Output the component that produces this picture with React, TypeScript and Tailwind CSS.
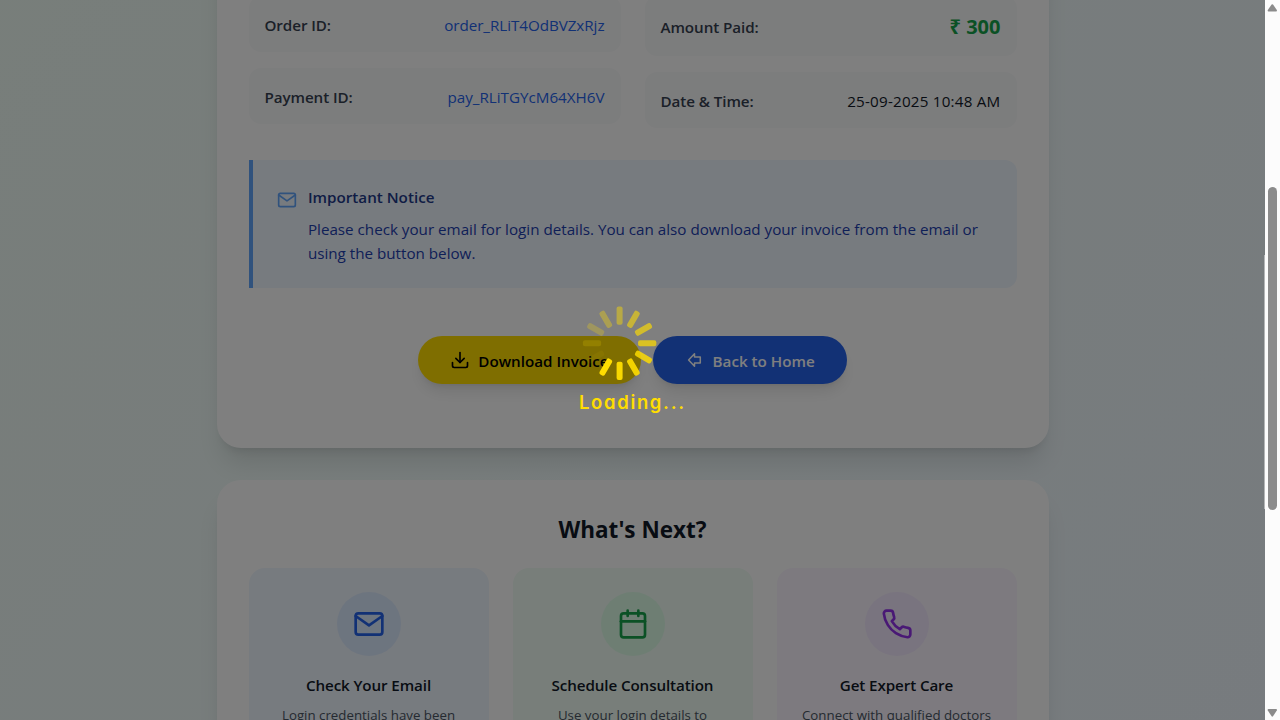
import type { ReactNode } from 'react';
import { FiCalendar, FiDownload, FiMail, FiPhone } from 'react-icons/fi';

function DetailRow({ label, children }: { label: string; children: ReactNode }) {
  return (
    <div className="flex items-center justify-between rounded-xl bg-[#f9fafb] p-4">
      <span className="-mb-px pt-px text-[15.2px] leading-6 font-semibold tracking-[-0.08px] text-[#374151]">{label}</span>
      {children}
    </div>
  );
}

function NextStep({
  card,
  circle,
  icon,
  title,
  children,
}: {
  card: string;
  circle: string;
  icon: ReactNode;
  title: string;
  children: ReactNode;
}) {
  return (
    <div className={`rounded-2xl p-6 text-center ${card}`}>
      <div className={`mx-auto mb-4 flex size-16 items-center justify-center rounded-full ${circle}`}>{icon}</div>
      <h3 className="mb-[7px] pt-px text-[15.2px] leading-6 font-semibold tracking-[-0.11px] text-[#111827]">{title}</h3>
      <p className="pt-px text-[13.3px] leading-5 text-[#4b5563]">{children}</p>
    </div>
  );
}

const SPOKES = [1, 0.95, 0.9, 0.82, 0.72, 0.65, 0.56, 0.45, 0.35, 0.25, 0.16, 0.06];

function Spinner() {
  return (
    <svg width="80" height="80" viewBox="-39.6 -40.2 80 80">
      {SPOKES.map((opacity, i) => (
        <rect
          key={i}
          x="-3"
          y="-36.7"
          width="6"
          height="18.2"
          rx="2"
          fill="#ffdd00"
          opacity={opacity}
          transform={`rotate(${210 - i * 30})`}
        />
      ))}
    </svg>
  );
}

function ScrollBar() {
  return (
    <div className="flex w-[15px] shrink-0 flex-col items-center bg-[#fcfcfc]">
      <svg width="15" height="16" viewBox="0 0 15 16" fill="#8b8b8b">
        <path d="M6.6 4.6q.7-.9 1.4 0l3.8 5.4q.5 1.5-.7 1.5H3.5q-1.2 0-.7-1.5z" />
      </svg>
      <div className="mt-[171px] h-[323px] w-[9px] rounded-full bg-[#8b8b8b]" />
      <svg className="mt-auto" width="15" height="16" viewBox="0 0 15 16" fill="#8b8b8b">
        <path d="M6.6 12.2q.7.9 1.4 0l3.8-5.6q.5-1.5-.7-1.5H3.5q-1.2 0-.7 1.5z" />
      </svg>
    </div>
  );
}

export default function App() {
  return (
    <div className="flex h-[720px] w-[1280px] overflow-hidden font-['Open_Sans','Noto_Sans',sans-serif]">
      <div className="relative min-w-0 flex-1 overflow-hidden">
        <main className="-mt-[380px] h-[1529px] bg-linear-to-br/srgb from-[#f0fdf4] to-[#eff6ff] pt-[180px]">
          <div className="mx-auto flex w-[832px] flex-col gap-8">
            <section className="rounded-3xl bg-white px-8 pt-[196px] pb-16 shadow-xl">
              <div className="grid grid-cols-2 items-start gap-6">
                <div className="flex flex-col gap-4">
                  <DetailRow label="Order ID:">
                    <span className="-mb-px pt-px text-[15.2px] leading-6 tracking-[-0.04px] text-[#2563eb]">
                      order_RLiT4OdBVZxRjz
                    </span>
                  </DetailRow>
                  <DetailRow label="Payment ID:">
                    <span className="-mb-px pt-px text-[15.2px] leading-6 text-[#2563eb]">pay_RLiTGYcM64XH6V</span>
                  </DetailRow>
                </div>
                <div className="flex flex-col gap-4">
                  <DetailRow label="Amount Paid:">
                    <span className="-mb-px pt-px text-[20px] leading-7 font-bold text-[#16a34a]">₹ 300</span>
                  </DetailRow>
                  <DetailRow label="Date & Time:">
                    <span className="-mb-px pt-px text-[15.2px] leading-6 tracking-[0.22px] text-[#111827]">
                      25-09-2025 10:48 AM
                    </span>
                  </DetailRow>
                </div>
              </div>

              <div className="mt-8 flex gap-3 rounded-r-xl border-l-4 border-[#60a5fa] bg-[#eff6ff] p-6">
                <FiMail className="mt-1.5 size-5 shrink-0 text-[#60a5fa]" />
                <div className="-ml-[0.6px]">
                  <h3 className="mb-[7px] pt-px text-[15.2px] leading-6 font-semibold text-[#1e3a8a]">Important Notice</h3>
                  <p className="-mb-px pt-px text-[15.2px] leading-6 text-[#1e40af]">
                    Please check your email for login details. You can also download your invoice from the email or
                    using the button below.
                  </p>
                </div>
              </div>

              <div className="mt-12 flex justify-center gap-3">
                <button className="flex h-12 items-center gap-2 rounded-full bg-[#ffdd00] px-8 text-[15.2px] font-semibold whitespace-nowrap text-black shadow-lg">
                  <FiDownload className="size-5" />
                  <span className="pt-0.5">Download Invoice</span>
                </button>
                <button className="flex h-12 items-center gap-2 rounded-full bg-[#2563eb] px-8 text-[15.2px] font-semibold whitespace-nowrap text-white shadow-lg">
                  <svg
                    width="20"
                    height="20"
                    viewBox="0 0 20 20"
                    fill="none"
                    stroke="currentColor"
                    strokeWidth="1.5"
                    strokeLinejoin="round"
                  >
                    <path d="M3.6 10l5.9-6.2v3.1h5.8v6.2H9.500v3.1z" />
                  </svg>
                  <span className="pt-0.5">Back to Home</span>
                </button>
              </div>
            </section>

            <section className="rounded-3xl bg-white p-8 shadow-xl">
              <h2 className="mb-[22px] pt-0.5 text-center text-[22.5px] leading-8 font-bold text-[#111827]">
                What's Next?
              </h2>
              <div className="grid grid-cols-3 gap-6">
                <NextStep
                  card="bg-[#eff6ff]"
                  circle="bg-[#dbeafe]"
                  icon={<FiMail className="size-8 text-[#2563eb]" />}
                  title="Check Your Email"
                >
                  Login credentials have been
                </NextStep>
                <NextStep
                  card="bg-[#f0fdf4]"
                  circle="bg-[#dcfce7]"
                  icon={<FiCalendar className="size-8 text-[#16a34a]" />}
                  title="Schedule Consultation"
                >
                  Use your login details to
                </NextStep>
                <NextStep
                  card="bg-[#faf5ff]"
                  circle="bg-[#f3e8ff]"
                  icon={<FiPhone className="size-8 text-[#9333ea]" />}
                  title="Get Expert Care"
                >
                  Connect with qualified doctors
                </NextStep>
              </div>
            </section>
          </div>
        </main>

        <div className="absolute inset-0 bg-black/50">
          <div className="absolute top-[303px] left-[580px] flex flex-col items-start">
            <Spinner />
            <p className="mt-[7px] -ml-px font-['Inter',sans-serif] text-[18.5px] leading-6 font-semibold tracking-[1.65px] whitespace-nowrap text-[#ffdd00] [font-feature-settings:'cv11']">
              Loading...
            </p>
          </div>
          <div className="absolute top-[255px] right-0 h-[254px] w-px bg-[#b4b6b7]" />
        </div>
      </div>
      <ScrollBar />
    </div>
  );
}
